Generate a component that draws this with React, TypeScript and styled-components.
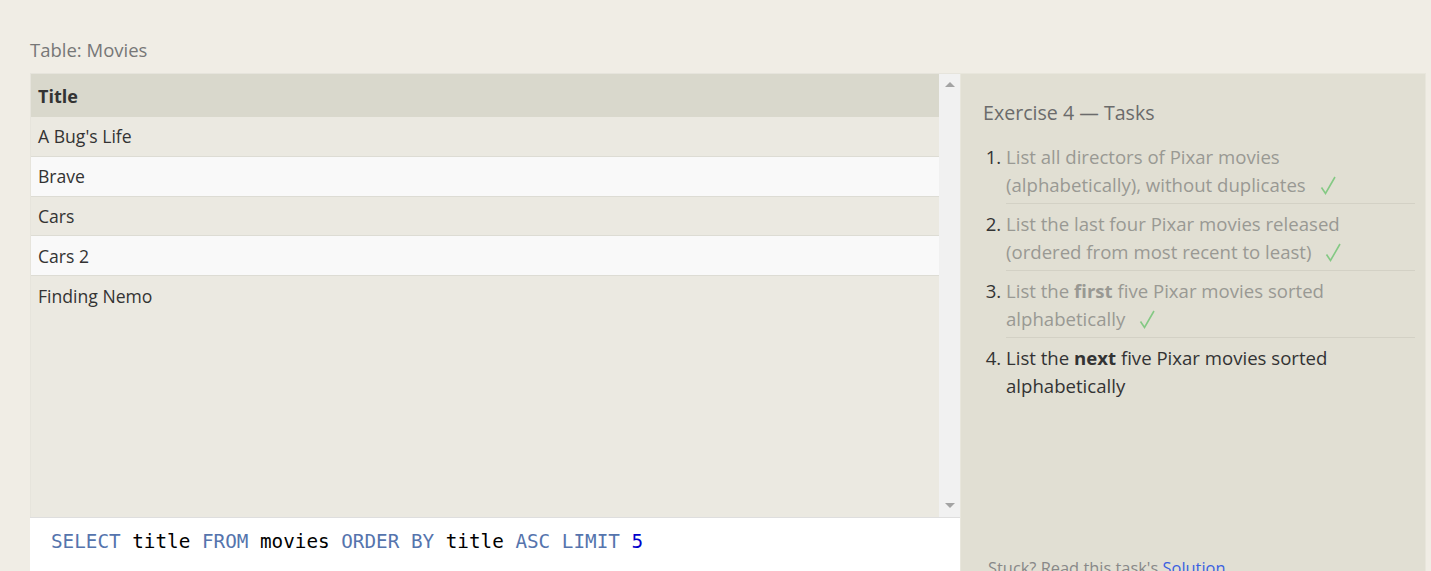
import React from "react";
import styled, { createGlobalStyle } from "styled-components";

const GlobalStyle = createGlobalStyle`
  html, body {
    margin: 0;
    padding: 0;
    overflow: hidden;
    background: #f0ede5;
    font-family: "Open Sans", "Liberation Sans", sans-serif;
  }
`;

const Page = styled.div`
  padding: 37px 5px 0 30px;
`;

const Caption = styled.div`
  font-size: 18.5px;
  line-height: 26px;
  color: #777;
  margin-bottom: 10px;
`;

const Workspace = styled.div`
  display: flex;
  align-items: stretch;
`;

const LeftColumn = styled.div`
  width: 930px;
  display: flex;
  flex-direction: column;
`;

const TableFrame = styled.div`
  height: 443px;
  border: 1px solid #e6e4dc;
  border-bottom: none;
  border-right: none;
  display: flex;
  background: #ebe9e1;
`;

const TableBody = styled.div`
  flex: 1;
  display: flex;
  flex-direction: column;
`;

const HeaderCell = styled.div`
  height: 43px;
  display: flex;
  align-items: center;
  padding-left: 7px;
  background: #d9d8cc;
  font-weight: 700;
  font-size: 18px;
  color: #333;
`;

const Row = styled.div<{ $even: boolean }>`
  height: 38.8px;
  display: flex;
  align-items: center;
  padding-left: 7px;
  background: ${(p) => (p.$even ? "#f9f9f9" : "#ebe9e1")};
  border-bottom: 1px solid #dddcd4;
  font-size: 17.6px;
  color: #333;

  &:last-child {
    border-bottom: none;
  }
`;

const Scrollbar = styled.div`
  width: 21px;
  background: #f1f1f1;
  display: flex;
  flex-direction: column;
  justify-content: space-between;
  align-items: center;
  padding: 8px 0 9px;
`;

const Arrow = styled.div<{ $down?: boolean }>`
  width: 0;
  height: 0;
  border-left: 5px solid transparent;
  border-right: 5px solid transparent;
  ${(p) =>
    p.$down
      ? "border-top: 5px solid #a3a3a3;"
      : "border-bottom: 5px solid #a3a3a3;"}
`;

const Editor = styled.div`
  height: 120px;
  background: #fff;
  border-top: 1px solid #dedede;
  padding: 11px 21px;
  font-family: "DejaVu Sans Mono", "Liberation Mono", monospace;
  font-size: 19.3px;
  line-height: 26px;
  color: #000;
  white-space: pre;
`;

const Keyword = styled.span`
  color: #5574ad;
`;

const NumberLit = styled.span`
  color: #0000cc;
`;

const TaskPanel = styled.div`
  flex: 1;
  background: #e1dfd3;
  border: 1px solid #e8e6dc;
  border-bottom: none;
  padding: 26px 10px 0 22px;
  display: flex;
  flex-direction: column;
`;

const TaskTitle = styled.div`
  font-size: 19.6px;
  line-height: 26px;
  color: #6b6b6b;
  margin-bottom: 11px;
`;

const TaskList = styled.ol`
  margin: 0;
  padding-left: 23px;
`;

const Task = styled.li<{ $done: boolean }>`
  font-size: 18.6px;
  line-height: 28px;
  height: 56px;
  padding: 6px 0 4px;
  color: ${(p) => (p.$done ? "#999993" : "#333")};
  border-bottom: 1px solid #d3d1c5;

  &::marker {
    color: #333;
  }

  &:last-child {
    border-bottom: none;
  }
`;

const CheckMark = styled.svg`
  width: 16px;
  height: 19px;
  margin-left: 14px;
  vertical-align: -3px;
`;

const Check = () => (
  <CheckMark viewBox="0 0 16 19">
    <polyline
      points="1.5,11.5 5.5,17.5 15,1"
      fill="none"
      stroke="#84c984"
      strokeWidth="1.6"
    />
  </CheckMark>
);

const Stuck = styled.div`
  margin-top: 153px;
  padding-left: 5px;
  font-size: 16.4px;
  line-height: 22px;
  color: #888;

  a {
    color: #3b5fe0;
    text-decoration: none;
  }
`;

const movies = ["A Bug's Life", "Brave", "Cars", "Cars 2", "Finding Nemo"];

export default function App() {
  return (
    <>
      <GlobalStyle />
      <Page>
        <Caption>Table: Movies</Caption>
        <Workspace>
          <LeftColumn>
            <TableFrame>
              <TableBody>
                <HeaderCell>Title</HeaderCell>
                {movies.map((m, i) => (
                  <Row key={m} $even={i % 2 === 1}>
                    {m}
                  </Row>
                ))}
              </TableBody>
              <Scrollbar>
                <Arrow />
                <Arrow $down />
              </Scrollbar>
            </TableFrame>
            <Editor>
              <Keyword>SELECT</Keyword> title <Keyword>FROM</Keyword> movies{" "}
              <Keyword>ORDER BY</Keyword> title <Keyword>ASC</Keyword>{" "}
              <Keyword>LIMIT</Keyword> <NumberLit>5</NumberLit>
            </Editor>
          </LeftColumn>
          <TaskPanel>
            <TaskTitle>Exercise 4 — Tasks</TaskTitle>
            <TaskList>
              <Task $done>
                List all directors of Pixar movies (alphabetically), without
                duplicates
                <Check />
              </Task>
              <Task $done>
                List the last four Pixar movies released (ordered from most
                recent to least)
                <Check />
              </Task>
              <Task $done>
                List the <b>first</b> five Pixar movies sorted alphabetically
                <Check />
              </Task>
              <Task $done={false}>
                List the <b>next</b> five Pixar movies sorted alphabetically
              </Task>
            </TaskList>
            <Stuck>
              Stuck? Read this task's <a href="#">Solution</a>
            </Stuck>
          </TaskPanel>
        </Workspace>
      </Page>
    </>
  );
}
